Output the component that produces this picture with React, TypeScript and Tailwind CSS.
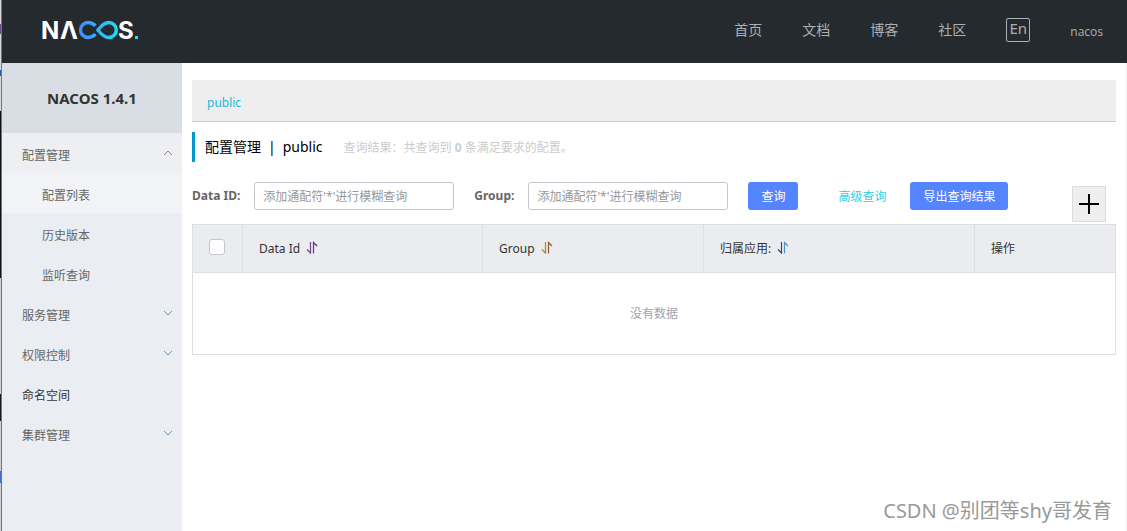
import { ReactNode } from "react";

const navLinks = ["首页", "文档", "博客", "社区"];

const desktopStrip = [
  "h-[24px] bg-[#d8d8d8]",
  "h-[10px] bg-[#6b4a96]",
  "h-[36px] bg-[#d8d8d8]",
  "h-[6px] bg-[#1f5fae]",
  "h-[35px] bg-[#d8d8d8]",
  "h-[167px] bg-[#101014]",
  "h-[116px] bg-[#d0d0d0]",
  "h-[27px] bg-[#16181d]",
  "h-[50px] bg-[#d0d0d0]",
  "h-[12px] bg-[#3f6fd8]",
  "flex-1 bg-[#d0d0d0]",
];

function Logo() {
  return (
    <svg width="104" height="40" viewBox="-2 -8 104 40" role="img" aria-label="NACOS.">
      <defs>
        <linearGradient id="loop" x1="37" y1="0" x2="78" y2="0" gradientUnits="userSpaceOnUse">
          <stop offset="0" stopColor="#4488ff" />
          <stop offset="1" stopColor="#18e2f4" />
        </linearGradient>
      </defs>
      <g fill="#ffffff" fontFamily="Inter, sans-serif" fontWeight="700" fontSize="24">
        <text x="0" y="21">N</text>
        <text x="19" y="21">Λ</text>
        <text x="77" y="21">S</text>
      </g>
      <path
        d="M54.5 7.8C52.300 5.500 49.800 4.500 47 4.500a7.500 7.500 0 0 0 0 15c2.900 0 5.500-1.200 7.500-3.300M56.800 12C60 8 63 4.500 67.800 4.500a7.500 7.500 0 0 1 0 15C63 19.500 60 16 56.800 12Z"
        fill="none"
        stroke="url(#loop)"
        strokeWidth="3.4"
        strokeLinejoin="round"
      />
      <rect x="94" y="18" width="3" height="3" fill="#18e2f4" />
    </svg>
  );
}

function Chevron({ up = false }: { up?: boolean }) {
  return (
    <svg
      width="10"
      height="6"
      viewBox="0 0 10 6"
      fill="none"
      stroke={up ? "#b07a5c" : "#6c98c4"}
      aria-hidden="true"
      className="mb-1.5"
    >
      <path d={up ? "M1 5 5 1l4 4" : "M1 1l4 4 4-4"} />
    </svg>
  );
}

function SortIcon({ left, right }: { left: string; right: string }) {
  return (
    <svg
      width="12"
      height="13"
      viewBox="0 0 12 13"
      fill="none"
      strokeWidth="1.2"
      aria-hidden="true"
      className="mb-0.5"
    >
      <path d="M4.500 1v11L1 8.500" stroke={left} />
      <path d="M7.500 12.500V1.500L11 5" stroke={right} />
    </svg>
  );
}

function MenuItem({ label, state, dark }: { label: string; state?: "open" | "closed"; dark?: boolean }) {
  return (
    <a
      href="#"
      className={`flex h-10 items-center justify-between pt-1.5 pr-[9px] pl-5 ${
        state === "open" ? "bg-[#eeeff3]" : ""
      } ${dark ? "text-[#333]" : "text-[#666]"}`}
    >
      {label}
      {state && <Chevron up={state === "open"} />}
    </a>
  );
}

function SubItem({ label, active }: { label: string; active?: boolean }) {
  return (
    <a href="#" className={`flex h-10 items-center pt-1.5 pl-10 text-[#666] ${active ? "bg-[#f2f3f7]" : ""}`}>
      {label}
    </a>
  );
}

function SearchField({ id, label }: { id: string; label: string }) {
  return (
    <div className="mr-5 flex items-center gap-[14px]">
      <label htmlFor={id} className="font-bold text-[#666]">
        {label}
      </label>
      <input
        id={id}
        type="text"
        placeholder="添加通配符'*'进行模糊查询"
        className="h-7 w-[200px] rounded-[3px] border border-[#c4c6cf] bg-white px-2 placeholder:text-[#999]"
      />
    </div>
  );
}

function HeadCell({ children, last }: { children: ReactNode; last?: boolean }) {
  return (
    <th className={`h-12 border-b border-[#dcdee3] px-4 text-left font-normal ${last ? "" : "border-r"}`}>
      <span className="flex items-center gap-1.5">{children}</span>
    </th>
  );
}

export default function App() {
  return (
    <div className="relative flex min-h-screen bg-white font-['Noto_Sans','Noto_Sans_CJK_SC',sans-serif] text-xs text-[#333]">
      <div className="flex w-[2px] shrink-0 flex-col border-r border-[#777]" aria-hidden="true">
        {desktopStrip.map((band, i) => (
          <div key={i} className={band} />
        ))}
      </div>
      <div className="flex min-w-0 flex-1 flex-col">
        <header className="flex h-[63px] items-center justify-between bg-[#252a2f] pr-6 pl-[37px] text-[#adb0b3]">
          <a href="#" className="pb-1">
            <Logo />
          </a>
          <nav className="flex items-center gap-10 text-sm">
            {navLinks.map((label) => (
              <a key={label} href="#" className="pb-1">
                {label}
              </a>
            ))}
            <button
              type="button"
              className="mb-1 flex h-6 w-6 items-center justify-center rounded-xs border border-[#adb0b3] pb-0.5 text-[15px]"
            >
              En
            </button>
            <a href="#" className="font-['Open_Sans',sans-serif] text-xs">
              nacos
            </a>
          </nav>
        </header>

        <div className="flex flex-1 border-r border-[#eee]">
          <aside className="w-[180px] shrink-0 bg-[#eaedf2]">
            <h1 className="flex h-[70px] items-center justify-center bg-[#d9dee4] text-[15px] font-bold">
              NACOS 1.4.1
            </h1>
            <nav>
              <MenuItem label="配置管理" state="open" />
              <SubItem label="配置列表" active />
              <SubItem label="历史版本" />
              <SubItem label="监听查询" />
              <MenuItem label="服务管理" state="closed" />
              <MenuItem label="权限控制" state="closed" />
              <MenuItem label="命名空间" dark />
              <MenuItem label="集群管理" state="closed" />
            </nav>
          </aside>

          <main className="min-w-0 flex-1 px-[10px] pt-[17px]">
            <div className="flex h-[42px] items-center border-b border-[#ccc] bg-[#eee] px-[15px] pt-1">
              <a href="#" className="text-[#1bb9d8]">
                public
              </a>
            </div>

            <div className="mt-[10px] flex h-[30px] items-center border-l-[3px] border-[#09c] pl-[10px]">
              <h2 className="flex gap-[7px] text-sm text-black">
                <span>配置管理</span>
                <span>|</span>
                <span>public</span>
              </h2>
              <p className="ml-[21px] pt-0.5 text-[#ccc]">
                查询结果：共查询到 <strong>0</strong> 条满足要求的配置。
              </p>
            </div>

            <form className="mt-5 flex h-[42px] items-start">
              <SearchField id="data-id" label="Data ID:" />
              <SearchField id="group" label="Group:" />
              <button type="button" className="h-7 rounded-[3px] bg-[#5584ff] px-[13px] pt-px text-white">
                查询
              </button>
              <a href="#" className="mr-6 ml-10 flex h-7 items-center pt-px text-[#33cde5]">
                高级查询
              </a>
              <button type="button" className="h-7 rounded-[3px] bg-[#5584ff] px-[13px] pt-px text-white">
                导出查询结果
              </button>
              <button
                type="button"
                aria-label="新建配置"
                className="mt-1 mr-[10px] ml-auto flex h-9 w-[34px] items-center justify-center border border-[#ddd] bg-[#eee]"
              >
                <svg width="20" height="20" viewBox="0 0 20 20" stroke="#000" strokeWidth="2" aria-hidden="true">
                  <path d="M0 10h20M10 0v20" />
                </svg>
              </button>
            </form>

            <table className="w-full table-fixed border-separate border-spacing-0 border border-[#dcdee3]">
              <colgroup>
                <col className="w-[50px]" />
                <col className="w-[240px]" />
                <col className="w-[221px]" />
                <col className="w-[271px]" />
                <col />
              </colgroup>
              <thead className="bg-[#ebecf0]">
                <tr>
                  <HeadCell>
                    <input
                      type="checkbox"
                      aria-label="全选"
                      className="mb-1 h-4 w-4 appearance-none rounded-[3px] border border-[#c4c6cf] bg-white"
                    />
                  </HeadCell>
                  <HeadCell>
                    Data Id <SortIcon left="#6a4a8e" right="#7b2c7b" />
                  </HeadCell>
                  <HeadCell>
                    Group <SortIcon left="#c07a2c" right="#8b5a2c" />
                  </HeadCell>
                  <HeadCell>
                    归属应用: <SortIcon left="#2c4a6b" right="#4f8fcb" />
                  </HeadCell>
                  <HeadCell last>操作</HeadCell>
                </tr>
              </thead>
              <tbody>
                <tr>
                  <td colSpan={5} className="h-[81px] text-center text-[#a0a2ad]">
                    没有数据
                  </td>
                </tr>
              </tbody>
            </table>
          </main>
        </div>
      </div>
      <p className="absolute right-[15px] bottom-1.5 text-xl leading-7 text-[#999]">CSDN @别团等shy哥发育</p>
    </div>
  );
}
